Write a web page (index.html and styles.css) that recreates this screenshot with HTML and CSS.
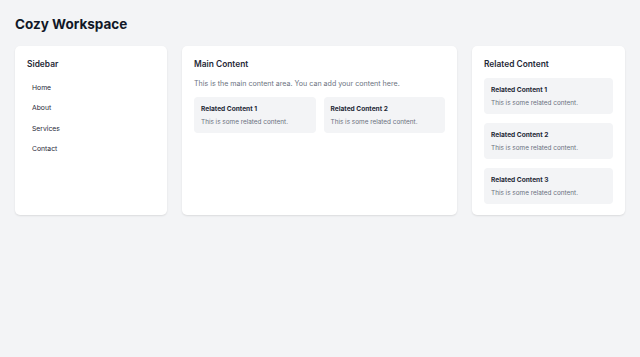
FILE: index.html
```html
<!DOCTYPE html>
<html lang="en">
<head>
    <meta charset="UTF-8">
    <meta name="viewport" content="width=device-width, initial-scale=1.0">
    <title>Cozy Workspace</title>
    <link rel="stylesheet" href="styles.css">
</head>
<body>
    <h1 class="page-title">Cozy Workspace</h1>

    <div class="layout">
        <div class="card sidebar">
            <h2 class="card-title">Sidebar</h2>
            <ul class="nav">
                <li><a href="#" class="nav-link">Home</a></li>
                <li><a href="#" class="nav-link">About</a></li>
                <li><a href="#" class="nav-link">Services</a></li>
                <li><a href="#" class="nav-link">Contact</a></li>
            </ul>
        </div>

        <div class="card main">
            <h2 class="card-title">Main Content</h2>
            <p class="intro">This is the main content area. You can add your content here.</p>
            <div class="tiles">
                <div class="tile">
                    <h3 class="tile-title">Related Content 1</h3>
                    <p class="tile-text">This is some related content.</p>
                </div>
                <div class="tile">
                    <h3 class="tile-title">Related Content 2</h3>
                    <p class="tile-text">This is some related content.</p>
                </div>
            </div>
        </div>

        <div class="card related">
            <h2 class="card-title">Related Content</h2>
            <div class="stack">
                <div class="tile">
                    <h3 class="tile-title">Related Content 1</h3>
                    <p class="tile-text">This is some related content.</p>
                </div>
                <div class="tile">
                    <h3 class="tile-title">Related Content 2</h3>
                    <p class="tile-text">This is some related content.</p>
                </div>
                <div class="tile">
                    <h3 class="tile-title">Related Content 3</h3>
                    <p class="tile-text">This is some related content.</p>
                </div>
            </div>
        </div>
    </div>
</body>
</html>
```

FILE: styles.css
```css
body {
    margin: 0;
    padding: 15px;
    background-color: #f3f4f6;
    font-family: Inter, "Noto Sans", sans-serif;
    color: #111827;
}

.page-title {
    margin: 0 0 13px 0;
    font-size: 13.5px;
    line-height: 18px;
    font-weight: 700;
}

.layout {
    display: grid;
    grid-template-columns: 152px 1fr 153px;
    gap: 15px;
}

.card {
    background-color: #fff;
    border-radius: 5px;
    padding: 13px 12px 11px 12px;
    box-shadow: 0 1px 2px rgba(0, 0, 0, 0.1);
}

.card-title {
    margin: 0;
    font-size: 8.4px;
    line-height: 11px;
    font-weight: 600;
    color: #1f2937;
}

.nav {
    list-style: none;
    margin: 8px 0 0 0;
    padding: 0;
}

.nav-link {
    display: block;
    padding: 5px 5px;
    font-size: 6.8px;
    line-height: 10.3px;
    color: #1f2937;
    text-decoration: none;
}

.intro {
    margin: 9px 0 8px 0;
    font-size: 7.1px;
    line-height: 10px;
    color: #6b7280;
}

.tiles {
    display: grid;
    grid-template-columns: 1fr 1fr;
    gap: 8px;
}

.stack {
    display: flex;
    flex-direction: column;
    gap: 9px;
    margin-top: 8px;
}

.tile {
    background-color: #f3f4f6;
    border-radius: 4px;
    padding: 8px 7px 6px 7px;
}

.tile-title {
    margin: 0 0 4px 0;
    font-size: 6.6px;
    line-height: 9px;
    font-weight: 700;
    color: #1f2937;
}

.tile-text {
    margin: 0;
    font-size: 6.4px;
    line-height: 9px;
    color: #6b7280;
}
```
